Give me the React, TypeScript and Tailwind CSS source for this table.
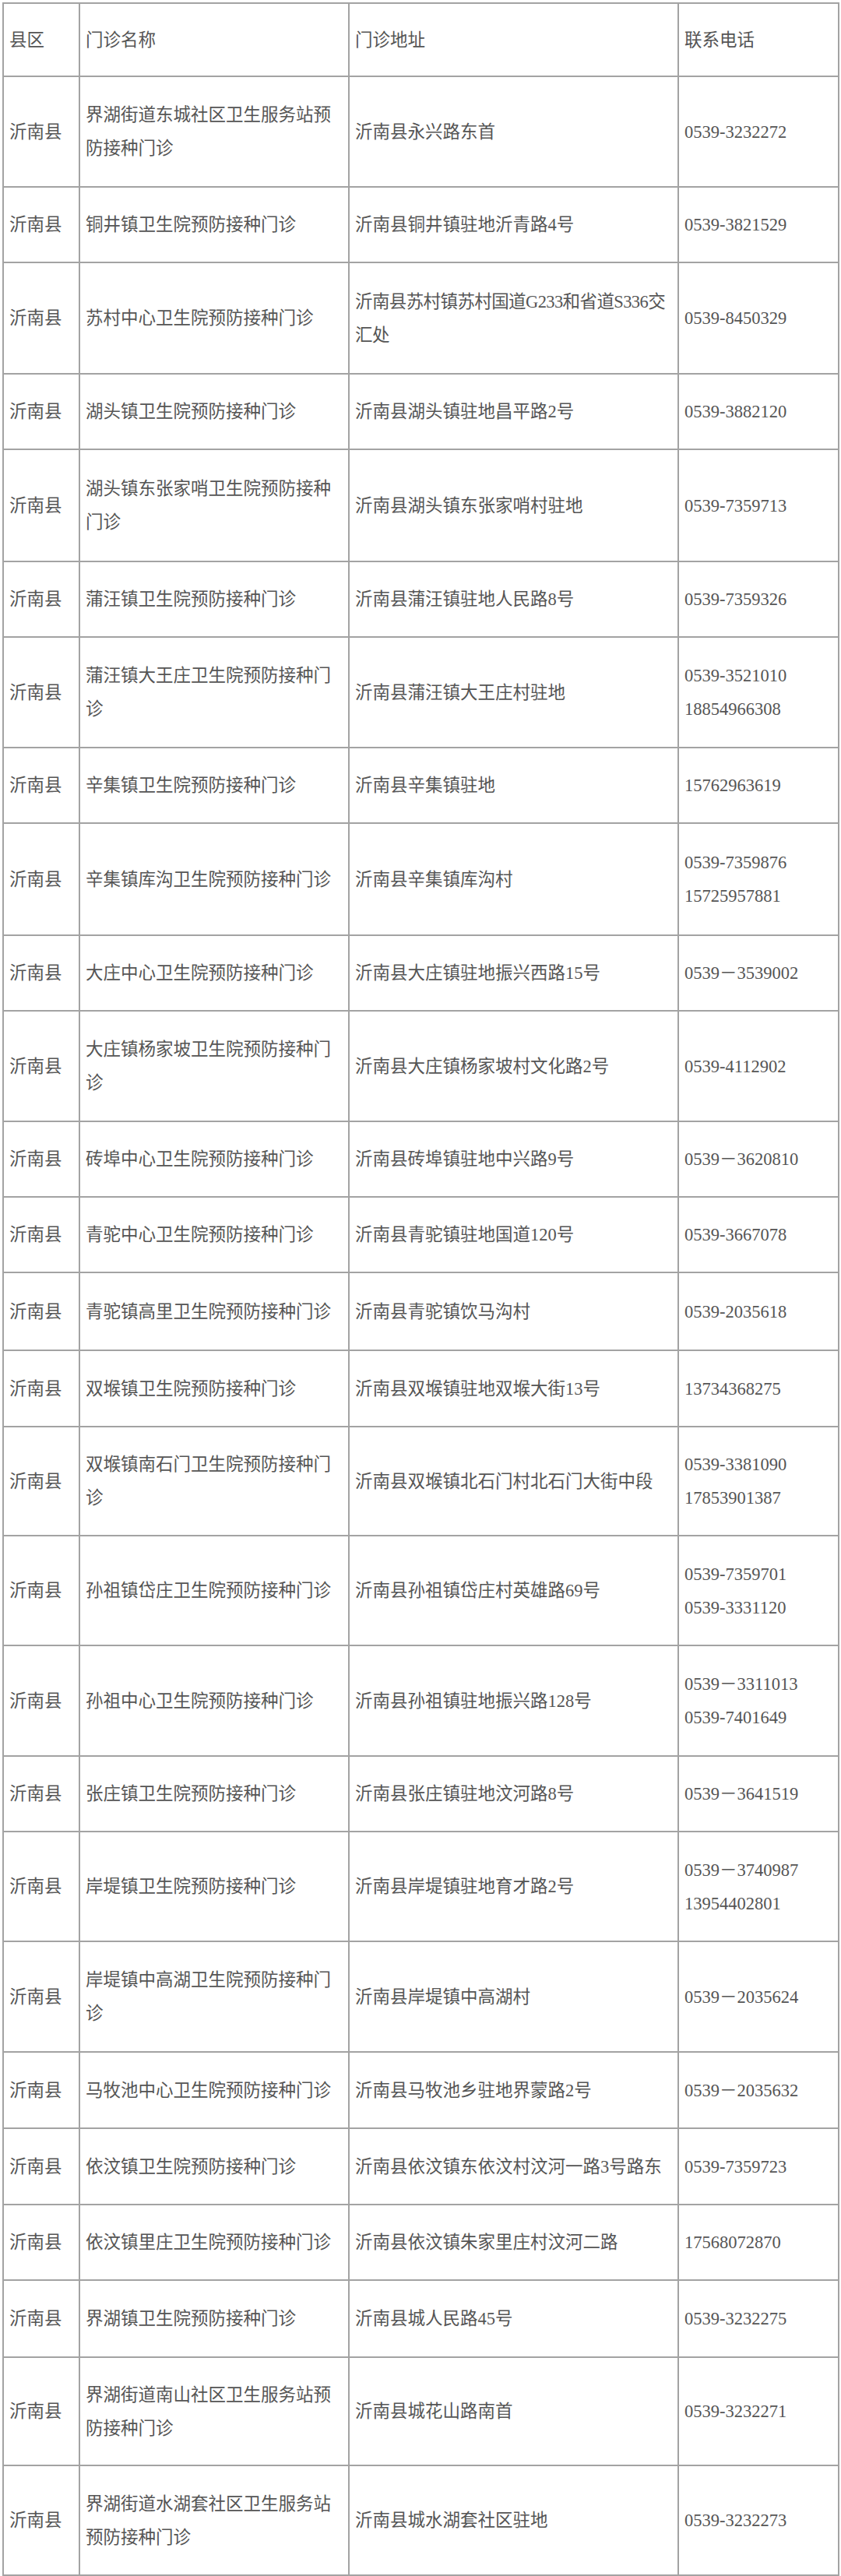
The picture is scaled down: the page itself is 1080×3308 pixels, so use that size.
import React from "react";

type Row = {
  h: string;
  name: string[];
  addr: string[];
  phone: string[];
  addrCls?: string;
};

const rows: Row[] = [
  { h: "h-[142px]", name: ["界湖街道东城社区卫生服务站预", "防接种门诊"], addr: ["沂南县永兴路东首"], phone: ["0539-3232272"] },
  { h: "h-[97px]", name: ["铜井镇卫生院预防接种门诊"], addr: ["沂南县铜井镇驻地沂青路4号"], phone: ["0539-3821529"] },
  { h: "h-[143px]", name: ["苏村中心卫生院预防接种门诊"], addr: ["沂南县苏村镇苏村国道G233和省道S336交", "汇处"], phone: ["0539-8450329"], addrCls: "tracking-[-0.6px]" },
  { h: "h-[97px]", name: ["湖头镇卫生院预防接种门诊"], addr: ["沂南县湖头镇驻地昌平路2号"], phone: ["0539-3882120"] },
  { h: "h-[144px]", name: ["湖头镇东张家哨卫生院预防接种", "门诊"], addr: ["沂南县湖头镇东张家哨村驻地"], phone: ["0539-7359713"] },
  { h: "h-[97px]", name: ["蒲汪镇卫生院预防接种门诊"], addr: ["沂南县蒲汪镇驻地人民路8号"], phone: ["0539-7359326"] },
  { h: "h-[142px]", name: ["蒲汪镇大王庄卫生院预防接种门", "诊"], addr: ["沂南县蒲汪镇大王庄村驻地"], phone: ["0539-3521010", "18854966308"] },
  { h: "h-[97px]", name: ["辛集镇卫生院预防接种门诊"], addr: ["沂南县辛集镇驻地"], phone: ["15762963619"] },
  { h: "h-[144px]", name: ["辛集镇库沟卫生院预防接种门诊"], addr: ["沂南县辛集镇库沟村"], phone: ["0539-7359876", "15725957881"] },
  { h: "h-[97px]", name: ["大庄中心卫生院预防接种门诊"], addr: ["沂南县大庄镇驻地振兴西路15号"], phone: ["0539－3539002"] },
  { h: "h-[142px]", name: ["大庄镇杨家坡卫生院预防接种门", "诊"], addr: ["沂南县大庄镇杨家坡村文化路2号"], phone: ["0539-4112902"] },
  { h: "h-[97px]", name: ["砖埠中心卫生院预防接种门诊"], addr: ["沂南县砖埠镇驻地中兴路9号"], phone: ["0539－3620810"] },
  { h: "h-[97px]", name: ["青驼中心卫生院预防接种门诊"], addr: ["沂南县青驼镇驻地国道120号"], phone: ["0539-3667078"] },
  { h: "h-[100px]", name: ["青驼镇高里卫生院预防接种门诊"], addr: ["沂南县青驼镇饮马沟村"], phone: ["0539-2035618"] },
  { h: "h-[98px]", name: ["双堠镇卫生院预防接种门诊"], addr: ["沂南县双堠镇驻地双堠大街13号"], phone: ["13734368275"] },
  { h: "h-[140px]", name: ["双堠镇南石门卫生院预防接种门", "诊"], addr: ["沂南县双堠镇北石门村北石门大街中段"], phone: ["0539-3381090", "17853901387"] },
  { h: "h-[141px]", name: ["孙祖镇岱庄卫生院预防接种门诊"], addr: ["沂南县孙祖镇岱庄村英雄路69号"], phone: ["0539-7359701", "0539-3331120"] },
  { h: "h-[142px]", name: ["孙祖中心卫生院预防接种门诊"], addr: ["沂南县孙祖镇驻地振兴路128号"], phone: ["0539－3311013", "0539-7401649"] },
  { h: "h-[97px]", name: ["张庄镇卫生院预防接种门诊"], addr: ["沂南县张庄镇驻地汶河路8号"], phone: ["0539－3641519"] },
  { h: "h-[141px]", name: ["岸堤镇卫生院预防接种门诊"], addr: ["沂南县岸堤镇驻地育才路2号"], phone: ["0539－3740987", "13954402801"] },
  { h: "h-[142px]", name: ["岸堤镇中高湖卫生院预防接种门", "诊"], addr: ["沂南县岸堤镇中高湖村"], phone: ["0539－2035624"] },
  { h: "h-[98px]", name: ["马牧池中心卫生院预防接种门诊"], addr: ["沂南县马牧池乡驻地界蒙路2号"], phone: ["0539－2035632"] },
  { h: "h-[98px]", name: ["依汶镇卫生院预防接种门诊"], addr: ["沂南县依汶镇东依汶村汶河一路3号路东"], phone: ["0539-7359723"] },
  { h: "h-[97px]", name: ["依汶镇里庄卫生院预防接种门诊"], addr: ["沂南县依汶镇朱家里庄村汶河二路"], phone: ["17568072870"] },
  { h: "h-[99px]", name: ["界湖镇卫生院预防接种门诊"], addr: ["沂南县城人民路45号"], phone: ["0539-3232275"] },
  { h: "h-[139px]", name: ["界湖街道南山社区卫生服务站预", "防接种门诊"], addr: ["沂南县城花山路南首"], phone: ["0539-3232271"] },
  { h: "h-[141px]", name: ["界湖街道水湖套社区卫生服务站", "预防接种门诊"], addr: ["沂南县城水湖套社区驻地"], phone: ["0539-3232273"] },
];

function Cell({ lines, cls = "" }: { lines: string[]; cls?: string }) {
  return (
    <div className="flex items-center pl-[7px] border-r-2 border-b-2 border-[#a3a3a3] overflow-visible">
      <div className={cls}>
        {lines.map((l, i) => (
          <div key={i} className="whitespace-nowrap">
            {l}
          </div>
        ))}
      </div>
    </div>
  );
}

export default function App() {
  return (
    <div className="w-[1080px] h-[3308px] bg-white pt-[3px]">
      <div className="ml-[3px] w-[1075px] border-l-2 border-t-2 border-[#a3a3a3] font-['Liberation_Serif','Noto_Sans_CJK_SC',sans-serif] text-[22.5px] leading-[43px] text-[#555555]">
        <div className="grid grid-cols-[98px_346px_423px_206px] h-[94px]">
          <Cell lines={["县区"]} />
          <Cell lines={["门诊名称"]} />
          <Cell lines={["门诊地址"]} />
          <Cell lines={["联系电话"]} />
        </div>
        {rows.map((r, i) => (
          <div key={i} className={`grid grid-cols-[98px_346px_423px_206px] ${r.h}`}>
            <Cell lines={["沂南县"]} />
            <Cell lines={r.name} />
            <Cell lines={r.addr} cls={r.addrCls ?? ""} />
            <Cell lines={r.phone} />
          </div>
        ))}
      </div>
    </div>
  );
}
